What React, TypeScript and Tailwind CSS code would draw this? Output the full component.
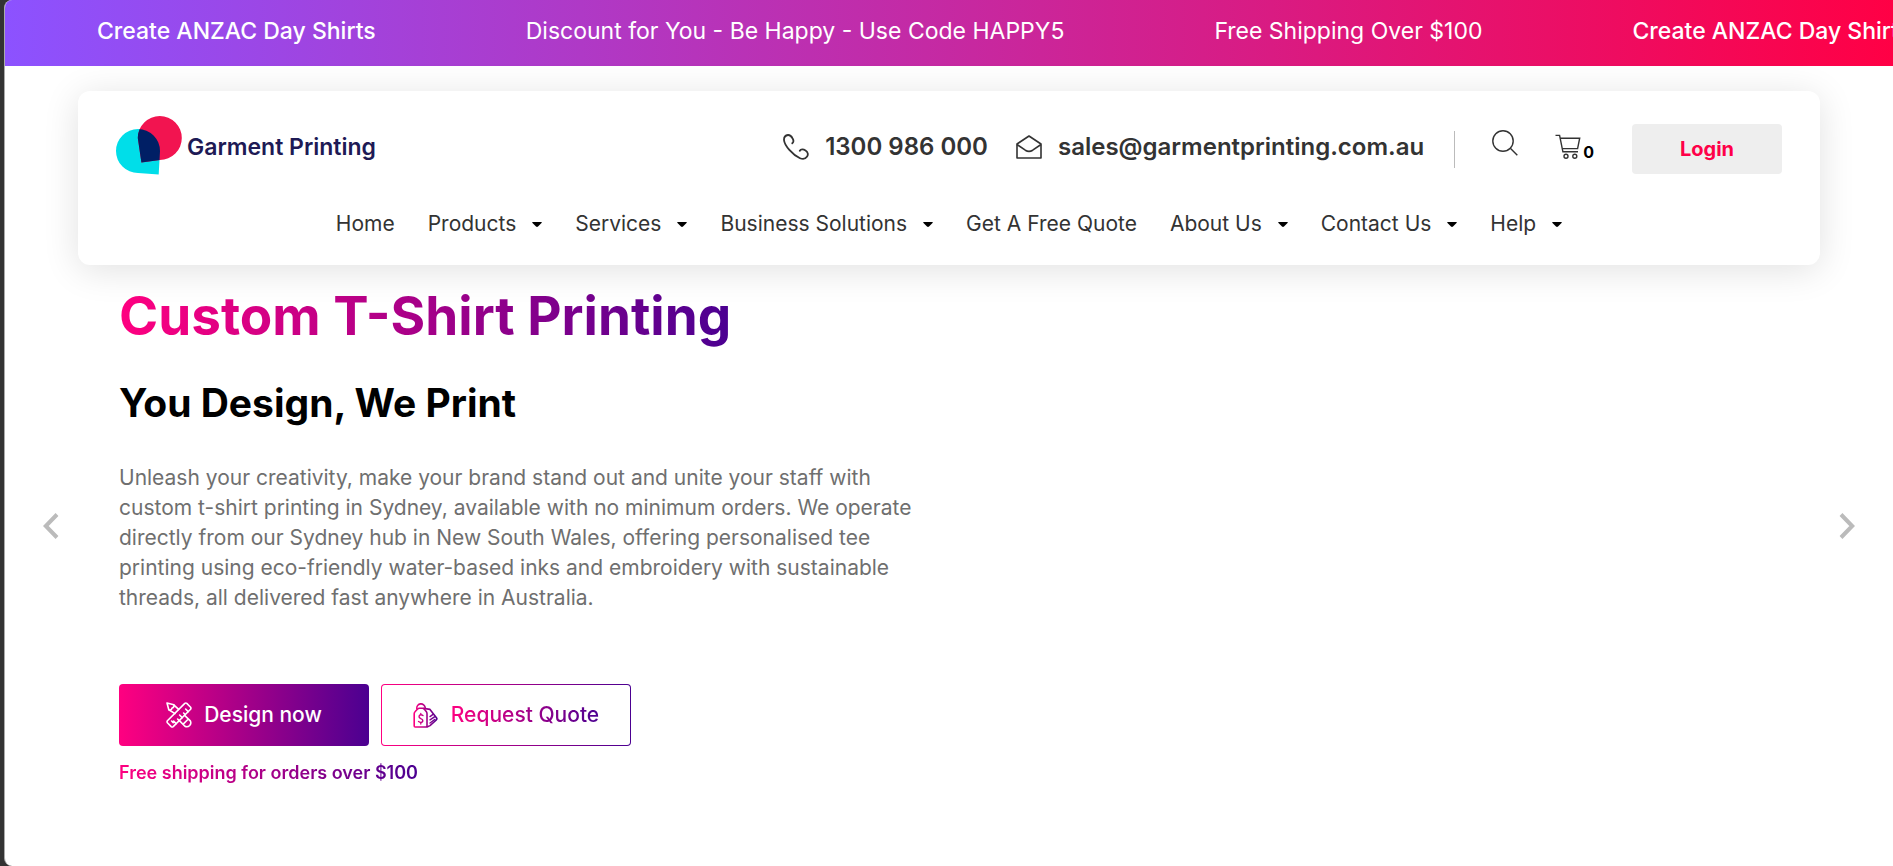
const PROMOS = [
  { text: 'Create ANZAC Day Shirts', strong: true },
  { text: 'Discount for You - Be Happy - Use Code HAPPY5', strong: false },
  { text: 'Free Shipping Over $100', strong: false },
  { text: 'Create ANZAC Day Shirts', strong: true },
]

const NAV_LINKS = [
  { label: 'Home', menu: false },
  { label: 'Products', menu: true },
  { label: 'Services', menu: true },
  { label: 'Business Solutions', menu: true },
  { label: 'Get A Free Quote', menu: false },
  { label: 'About Us', menu: true },
  { label: 'Contact Us', menu: true },
  { label: 'Help', menu: true },
]

const CYAN = 'M160 151 A22 22 0 1 0 138 173 L158.7 174.4 Z'
const PINK = 'M137.8 138 A22 22 0 1 1 159.8 160 L141.4 162.4 Z'

function Logo() {
  return (
    <a href="#home" className="flex items-center gap-1" aria-label="Garment Printing home">
      <svg width="67" height="59" viewBox="116 115 67 59" overflow="visible" aria-hidden="true">
        <defs>
          <clipPath id="logo-overlap">
            <path d={CYAN} />
          </clipPath>
        </defs>
        <path d={CYAN} fill="#00dee9" />
        <path d={PINK} fill="#f21450" />
        <path d={PINK} fill="#001f65" clipPath="url(#logo-overlap)" />
      </svg>
      <span className="pt-1 text-[23px] leading-8 font-semibold text-[#1e1a55]">Garment Printing</span>
    </a>
  )
}

function PhoneIcon() {
  return (
    <svg width="26" height="26" viewBox="0 0 26 26" fill="none" stroke="#333" strokeWidth="1.8" strokeLinecap="round" strokeLinejoin="round" aria-hidden="true">
      <path d="M9.3 9.3C10.8 8 10.6 6 9.5 4.2C8.3 2 6.8 .9 5 1C2.6 1.3 .9 3.3 1 6C1.4 11.5 9.5 20.8 17 24.2C19.5 25.3 22.6 24.8 24.1 22.6C25.4 20.6 25 18 22.5 16.4C20.3 15 17.8 15 16.8 16.8" />
    </svg>
  )
}

function MailIcon() {
  return (
    <svg width="26" height="24" viewBox="0 0 26 24" fill="none" stroke="#333" strokeWidth="1.6" strokeLinejoin="round" aria-hidden="true">
      <path d="M1 9L13 1L25 9V23H1Z" />
      <path d="M1 9.5L9.3 15.2Q13 17.5 16.7 15.2L25 9.5" />
    </svg>
  )
}

function SearchIcon() {
  return (
    <svg width="26" height="26" viewBox="0 0 26 26" fill="none" stroke="#333" strokeWidth="1.4" aria-hidden="true">
      <circle cx="11" cy="11" r="10.2" />
      <path d="M18.3 18.3L25.3 25.3" />
    </svg>
  )
}

function CartIcon() {
  return (
    <svg width="26" height="26" viewBox="0 0 26 26" fill="none" stroke="#333" strokeWidth="1.4" aria-hidden="true">
      <path d="M.5 1.4H4.6L7.9 17.8H23" />
      <path d="M5.2 4.2H24.7L22.6 14.6H7.3" />
      <circle cx="11" cy="22.3" r="2" />
      <circle cx="19.8" cy="22.3" r="2" />
    </svg>
  )
}

function DesignIcon() {
  return (
    <svg width="26" height="26" viewBox="0 0 26 26" fill="none" stroke="#fff" strokeWidth="1.6" strokeLinecap="round" strokeLinejoin="round" aria-hidden="true">
      {/* ruler */}
      <path d="M1.4 18.8L18.8 1.4Q19.8 .7 20.8 1.4L24.6 5.2Q25.3 6.2 24.6 7.2L7.2 24.6Q6.2 25.3 5.2 24.6L1.4 20.8Q.7 19.8 1.4 18.8Z" />
      <path d="M7.2 20.6L5.6 19M10.2 21.6L7.6 19M13.2 18.6L11.6 17M16.2 15.6L13.6 13M19.2 12.6L17.6 11M22.2 9.6L19.6 7" />
      {/* pencil */}
      <path d="M9 11.6L2.8 7.8L1 1L7.8 2.8L12.6 7.4" />
      <path d="M3.4 8.2Q5.8 8 6 6Q8 5.8 8.2 3.4" />
      <path d="M18.6 13.4L24.3 18.9Q25.6 21.4 23.7 23.5Q21.4 25.6 18.9 24.3L13.4 18.6M17.2 22.1L22.1 17.2" />
    </svg>
  )
}

function QuoteIcon() {
  return (
    <svg width="26" height="26" viewBox="0 0 26 26" fill="none" stroke="url(#quote-stroke)" strokeWidth="1.6" strokeLinecap="round" strokeLinejoin="round" aria-hidden="true">
      <defs>
        <linearGradient id="quote-stroke" gradientUnits="userSpaceOnUse" x1="1" y1="0" x2="25" y2="0">
          <stop offset="0" stopColor="#ff0080" />
          <stop offset="1" stopColor="#4b0091" />
        </linearGradient>
      </defs>
      <path d="M3.8 6.6A4.2 4.2 0 1 1 12.2 5.6" />
      <path d="M1.2 11.8Q1.2 10.6 2 9.8L4.6 7Q5.4 6.2 6.4 6.2H9.4Q10.4 6.2 11.2 7L13.4 9.8Q14 10.6 14 11.8V24Q14 25 13 25H2.2Q1.2 25 1.2 24Z" />
      <path d="M10.6 6.4L17 7.4L23.6 16Q24.3 17 23.3 18L17 23.6L14 25" />
      <path d="M17 14.6L20 12.4M17 17.8L21.5 14.8M17 21L22 17.4" strokeWidth="1.4" />
      <path d="M10 13.6Q7.8 11.8 6.2 13.6Q5.5 15.6 7.8 16.6Q10.3 17.5 9.7 19.5Q8 21.4 5.5 19.5M7.8 11.4V12.7M7.8 20.5V22" strokeWidth="1.3" />
    </svg>
  )
}

export default function App() {
  return (
    <div className="min-h-screen bg-[#333] pl-1 font-['Inter','Liberation_Sans',sans-serif]">
      <div className="min-h-screen overflow-hidden rounded-l-lg border-l border-[#aaa] bg-white">
        {/* Promo ticker */}
        <div className="flex h-[66px] items-center gap-[150px] overflow-hidden bg-linear-to-r/srgb from-[#8c52ff] to-[#ff0045] pb-1 pl-[92px] text-[23px] whitespace-nowrap text-white">
          {PROMOS.map(({ text, strong }, i) => (
            <a key={i} href="#promo" className={strong ? 'shrink-0 font-medium' : 'shrink-0'}>
              {text}
            </a>
          ))}
        </div>

        {/* Header card */}
        <header className="mx-[73px] mt-[25px] rounded-xl bg-white px-[38px] pt-6 pb-[26px] shadow-[0_5px_36px_rgba(0,0,0,0.12)]">
          <div className="flex items-end justify-between">
            <Logo />
            <div className="flex items-center">
              <div className="flex items-center gap-7 pb-1 text-2xl leading-8 font-semibold text-[#333]">
                <a href="tel:1300986000" className="flex items-center gap-4">
                  <PhoneIcon />
                  1300 986 000
                </a>
                <a href="mailto:sales@garmentprinting.com.au" className="flex items-center gap-4">
                  <MailIcon />
                  sales@garmentprinting.com.au
                </a>
              </div>
              <span className="ml-[30px] h-[37px] w-px bg-[#bbb]" />
              <button type="button" aria-label="Search" className="ml-[37px] pb-3">
                <SearchIcon />
              </button>
              <a href="#cart" aria-label="Cart" className="ml-[37px] flex items-end gap-0.5 pb-1 text-base leading-4 font-bold text-black">
                <CartIcon />
                0
              </a>
              <button type="button" className="ml-[38px] h-[50px] w-[150px] rounded bg-[#eee] text-[20px] font-bold text-[#ff0048]">
                Login
              </button>
            </div>
          </div>

          <nav className="mt-[35px]" aria-label="Main navigation">
            <ul className="flex items-center justify-center gap-[33px] text-[21px] leading-[30px] text-[#333]">
              {NAV_LINKS.map(({ label, menu }) => (
                <li key={label}>
                  <a href="#menu" className="flex items-center gap-4">
                    {label}
                    {menu && (
                      <svg width="10" height="5" viewBox="0 0 10 5" fill="#000" aria-hidden="true">
                        <path d="M.5 0H9.5Q10 .3 9.5 1L6 4.5Q5 5.3 4 4.5L.5 1Q0 .3 .5 0Z" />
                      </svg>
                    )}
                  </a>
                </li>
              ))}
            </ul>
          </nav>
        </header>

        {/* Hero slide */}
        <main className="flex justify-between px-[38px]">
          <button type="button" aria-label="Previous slide" className="mt-[248px] h-[26px]">
            <svg width="16" height="26" viewBox="0 0 16 26" fill="none" stroke="#bbb" strokeWidth="4" aria-hidden="true">
              <path d="M14 1.5L2.8 13L14 24.5" />
            </svg>
          </button>

          <section className="ml-[60px] flex-1 pt-4">
            <h1 className="w-fit bg-linear-to-r/srgb from-[#ff0080] to-[#4b0091] bg-clip-text text-[53px] leading-[70px] font-bold text-transparent">
              Custom T-Shirt Printing
            </h1>
            <h2 className="mt-[27px] text-[39px] leading-[50px] font-bold text-black">You Design, We Print</h2>
            <p className="mt-[35px] max-w-[816px] text-[21px] leading-[30px] text-[#6f6f6f]">
              Unleash your creativity, make your brand stand out and unite your staff with custom t-shirt printing in
              Sydney, available with no minimum orders. We operate directly from our Sydney hub in New South Wales,
              offering personalised tee printing using eco-friendly water-based inks and embroidery with sustainable
              threads, all delivered fast anywhere in Australia.
            </p>

            <div className="mt-[71px] flex gap-3">
              <a
                href="#design"
                className="flex h-[62px] w-[250px] items-center justify-center gap-3 rounded bg-linear-to-r/srgb from-[#ff0080] to-[#4b0091] text-[21px] font-medium text-white"
              >
                <DesignIcon />
                Design now
              </a>
              <a href="#quote" className="h-[62px] w-[250px] rounded bg-linear-to-r/srgb from-[#ff0080] to-[#4b0091] p-px">
                <span className="flex h-full items-center justify-center gap-3 rounded-[3px] bg-white text-[21px] font-medium">
                  <QuoteIcon />
                  <span className="bg-linear-to-r/srgb from-[#ff0080] to-[#4b0091] bg-clip-text text-transparent">
                    Request Quote
                  </span>
                </span>
              </a>
            </div>
            <p className="mt-[15px] w-fit bg-linear-to-r/srgb from-[#ff0080] to-[#4b0091] bg-clip-text text-[18px] leading-6 font-semibold text-transparent">
              Free shipping for orders over $100
            </p>
          </section>

          <button type="button" aria-label="Next slide" className="mt-[248px] h-[26px]">
            <svg width="16" height="26" viewBox="0 0 16 26" fill="none" stroke="#bbb" strokeWidth="4" aria-hidden="true">
              <path d="M2 1.5L13.2 13L2 24.5" />
            </svg>
          </button>
        </main>
      </div>
    </div>
  )
}
